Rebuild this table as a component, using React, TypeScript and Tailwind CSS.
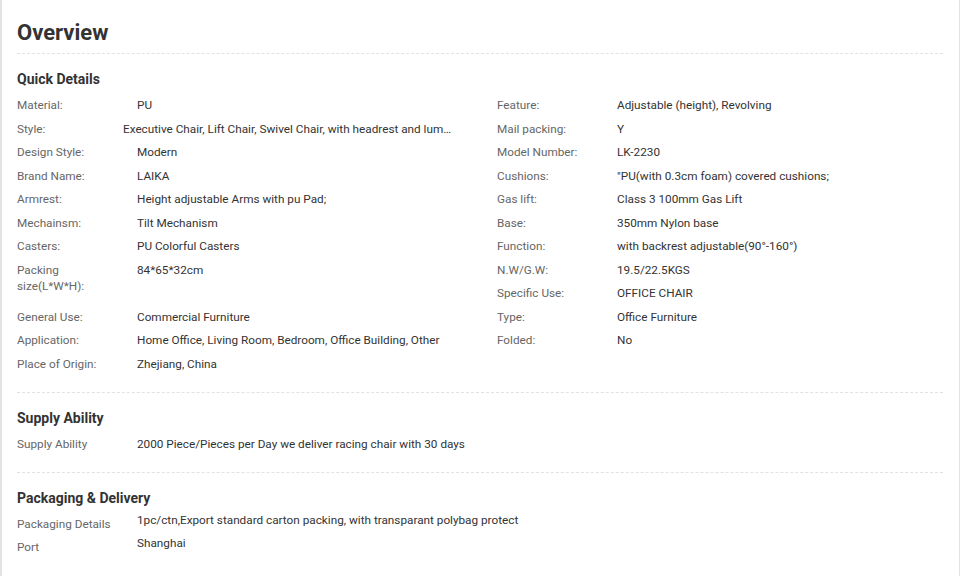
const left: [string, string][] = [
  ['Material:', 'PU'],
  ['Style:', 'Executive Chair, Lift Chair, Swivel Chair, with headrest and lumbar support'],
  ['Design Style:', 'Modern'],
  ['Brand Name:', 'LAIKA'],
  ['Armrest:', 'Height adjustable Arms with pu Pad;'],
  ['Mechainsm:', 'Tilt Mechanism'],
  ['Casters:', 'PU Colorful Casters'],
  ['Packing size(L*W*H):', '84*65*32cm'],
  ['General Use:', 'Commercial Furniture'],
  ['Application:', 'Home Office, Living Room, Bedroom, Office Building, Other'],
  ['Place of Origin:', 'Zhejiang, China'],
]

const right: [string, string][] = [
  ['Feature:', 'Adjustable (height), Revolving'],
  ['Mail packing:', 'Y'],
  ['Model Number:', 'LK-2230'],
  ['Cushions:', '"PU(with 0.3cm foam) covered cushions;'],
  ['Gas lift:', 'Class 3 100mm Gas Lift'],
  ['Base:', '350mm Nylon base'],
  ['Function:', 'with backrest adjustable(90°-160°)'],
  ['N.W/G.W:', '19.5/22.5KGS'],
  ['Specific Use:', 'OFFICE CHAIR'],
  ['Type:', 'Office Furniture'],
  ['Folded:', 'No'],
]

function Row({ label, value }: { label: string; value: string }) {
  const tall = label.startsWith('Packing size')
  const style = label === 'Style:'
  return (
    <div className={`flex text-[11.75px] leading-4 ${tall ? 'h-[47px]' : 'h-[23.5px]'}`}>
      <div className="w-[120px] shrink-0 pr-[20px] text-[#666]">{label}</div>
      {style ? (
        <div className="-ml-[14px] w-[332px] truncate text-[#333]">{value}</div>
      ) : (
        <div className="flex-1 text-[#333]">{value}</div>
      )}
    </div>
  )
}

export default function App() {
  return (
    <div className="h-[576px] w-[961px] bg-white" style={{ fontFamily: 'Roboto, "Liberation Sans", sans-serif' }}>
      <div className="h-full w-[960px] border-l-2 border-r border-[#e3e3e3] pl-[15px] pr-[16px]">
        <div className="border-b border-dashed border-[#e2e2e2] pb-[6px] pt-[19px]">
          <h1 className="text-[22px] font-bold leading-[28px] text-[#333]">Overview</h1>
        </div>

        <div className="border-b border-dashed border-[#e2e2e2] pb-[13px]">
          <h2 className="mt-[15px] text-[14px] font-bold leading-5 text-[#333]">Quick Details</h2>
          <div className="mt-[8px] flex">
            <div className="w-[480px]">
              {left.map(([l, v]) => (
                <Row key={l} label={l} value={v} />
              ))}
            </div>
            <div className="flex-1">
              {right.map(([l, v]) => (
                <Row key={l} label={l} value={v} />
              ))}
            </div>
          </div>
        </div>

        <div className="border-b border-dashed border-[#e2e2e2] pb-[12px]">
          <h2 className="mt-[15px] text-[14px] font-bold leading-5 text-[#333]">Supply Ability</h2>
          <div className="mt-[8px] flex h-[23.5px] text-[11.75px] leading-4">
            <div className="w-[120px] shrink-0 text-[#666]">Supply Ability</div>
            <div className="text-[#333]">2000 Piece/Pieces per Day we deliver racing chair with 30 days</div>
          </div>
        </div>

        <div>
          <h2 className="mt-[15px] text-[14px] font-bold leading-5 text-[#333]">Packaging &amp; Delivery</h2>
          <div className="mt-[4px] flex h-[23px] text-[11.75px] leading-4">
            <div className="w-[120px] shrink-0 pt-1 text-[#666]">Packaging Details</div>
            <div className="text-[#333]">1pc/ctn,Export standard carton packing, with transparant polybag protect</div>
          </div>
          <div className="flex h-[23px] text-[11.75px] leading-4">
            <div className="w-[120px] shrink-0 pt-1 text-[#666]">Port</div>
            <div className="text-[#333]">Shanghai</div>
          </div>
        </div>
      </div>
    </div>
  )
}
